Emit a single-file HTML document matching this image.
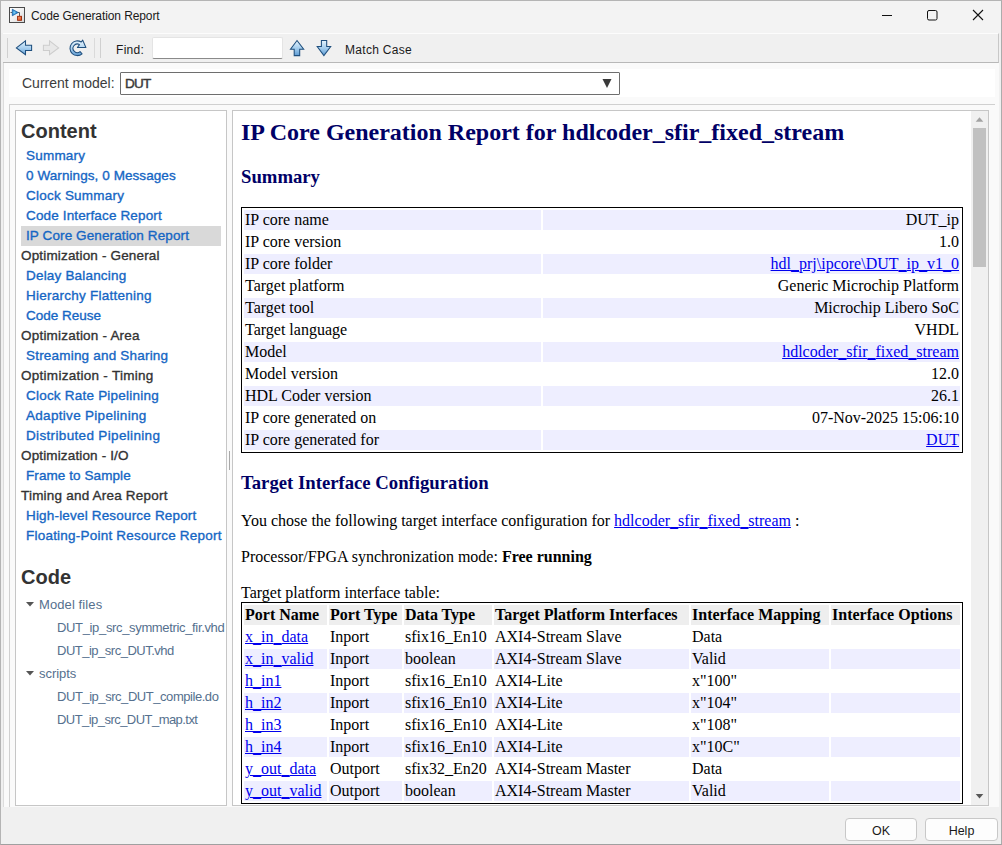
<!DOCTYPE html>
<html><head><meta charset="utf-8">
<style>
*{margin:0;padding:0;box-sizing:border-box}
html,body{width:1002px;height:845px;overflow:hidden;background:#f0f0f0;font-family:"Liberation Sans",sans-serif}
.a{position:absolute}
#win{position:absolute;left:0;top:0;width:1002px;height:845px;border:1px solid #b4b4b4;border-bottom-color:#a0a0a0;border-right-color:#acacac}
#title{position:absolute;left:1px;top:1px;width:1000px;height:32px;background:#f3f3f3}
#tbar{position:absolute;left:3px;top:33px;width:996px;height:30px;background:#f0f0f0;border-top:1px solid #fcfcfc;border-bottom:1px solid #b8b8b8;border-right:1px solid #c8c8c8;box-shadow:0 1px 0 #dedede}
#mid{position:absolute;left:3px;top:63px;width:996px;height:744px;background:#fafafa;border-left:1px solid #dcdcdc}
#cm{position:absolute;left:9px;top:69px;width:986px;height:28px;background:#fff}
#frame{position:absolute;left:9px;top:104px;width:986px;height:703px;border-left:1px solid #d0d0d0;border-top:1px solid #d0d0d0}
#lp{position:absolute;left:15px;top:110px;width:212px;height:696px;background:#fff;border:1px solid #c6c6c6}
#rp{position:absolute;left:232px;top:110px;width:757px;height:696px;background:#fff;border:1px solid #c6c6c6;overflow:hidden}
.btn{position:absolute;top:818px;width:72px;height:23px;background:#fdfdfd;border:1px solid #c8c8c8;border-radius:4px;font-size:12.5px;color:#1a1a1a;text-align:center;line-height:25px}
.hd{font-size:20px;font-weight:bold;line-height:20px;color:#333}
.nl,.nh{font-size:13.5px;line-height:20px;height:20px;white-space:nowrap;-webkit-text-stroke:0.35px currentColor}
.nl{color:#1566c4}
.nh{color:#333}
.cf{font-size:13px;line-height:23px;color:#55708e;white-space:nowrap}
.h2{font:bold 24px/28px "Liberation Serif",serif;color:#000066;white-space:nowrap}
.h3{font:bold 18.72px/22px "Liberation Serif",serif;color:#000066;white-space:nowrap}
.p{font:16px/20px "Liberation Serif",serif;color:#000;white-space:nowrap}
a{color:#0000ee;text-decoration:underline}
a i{font-style:normal;vertical-align:-1px;line-height:0}
.tb{border:1px solid #000;border-spacing:2px;border-collapse:separate;table-layout:fixed;font:16px/18px "Liberation Serif",serif;color:#000}
.tb td,.tb th{padding:1px;height:20px;white-space:nowrap;overflow:hidden;text-align:left;vertical-align:top}
.tb th{background:#eeeeee;font-weight:bold}
.tb td.r{text-align:right}
.tb tr.o td{background:#eeeeff}
</style></head><body>
<div id="win"></div>
<div id="title"></div>
<div id="tbar"></div>
<div id="mid"></div>
<div id="cm"></div>
<div id="frame"></div>
<div id="lp"></div>
<div id="rp"></div>

<!-- title bar -->
<svg class="a" style="left:9px;top:7px" width="16" height="16" viewBox="0 0 16 16">
 <defs><linearGradient id="ib" x1="0" y1="0" x2="1" y2="1"><stop offset="0" stop-color="#ffffff"/><stop offset="0.5" stop-color="#f0f0f0"/><stop offset="1" stop-color="#d4d4d4"/></linearGradient>
 <radialGradient id="tri" cx="0.35" cy="0.5" r="0.6"><stop offset="0" stop-color="#7fd0f4"/><stop offset="0.6" stop-color="#2a8ad0"/><stop offset="1" stop-color="#0b4f98"/></radialGradient>
 <linearGradient id="rs" x1="0" y1="0" x2="1" y2="1"><stop offset="0" stop-color="#f49a70"/><stop offset="1" stop-color="#e2501a"/></linearGradient></defs>
 <rect x="0.5" y="0.5" width="15" height="15" fill="url(#ib)" stroke="#4a4a4a"/>
 <path d="M1.5 5.5H3.2M9 5.5H10.5V9" stroke="#4a4a4a" fill="none" stroke-width="0.9"/>
 <path d="M3.3 2.2L9.2 5.5L3.3 8.8Z" fill="url(#tri)" stroke="#0d5aa0" stroke-width="0.7" stroke-linejoin="round"/>
 <rect x="8.6" y="9.3" width="3.9" height="4" fill="url(#rs)" stroke="#9a2200" stroke-width="0.9"/>
</svg>
<div class="a" style="left:31px;top:9px;font-size:12px;line-height:14px;color:#1a1a1a;letter-spacing:-0.1px">Code Generation Report</div>
<svg class="a" style="left:870px;top:0" width="130" height="32">
 <path d="M12 15.5H22" stroke="#111" stroke-width="1"/>
 <rect x="57.5" y="10.5" width="9.5" height="9.5" rx="1.5" fill="none" stroke="#111"/>
 <path d="M103 10L113 20M113 10L103 20" stroke="#111" stroke-width="1.1"/>
</svg>
<!-- toolbar -->
<div class="a" style="left:7px;top:38px;width:1px;height:20px;background:#d0d0d0"></div>
<svg class="a" style="left:0;top:30px" width="100" height="32" viewBox="0 30 100 32">
 <defs>
  <linearGradient id="ab" x1="0" y1="0" x2="0" y2="1"><stop offset="0" stop-color="#e6f4fd"/><stop offset="0.5" stop-color="#a9d0ef"/><stop offset="1" stop-color="#6aa5d9"/></linearGradient>
  <linearGradient id="rb" x1="0" y1="0" x2="0" y2="1"><stop offset="0" stop-color="#e9f5fd"/><stop offset="0.6" stop-color="#a8cfee"/><stop offset="1" stop-color="#5c9ad3"/></linearGradient>
 </defs>
 <path d="M16.4 47.9L25.5 40.9V45.3H31.6V50.5H25.5V54.7Z" fill="url(#ab)" stroke="#1f4f7e" stroke-width="1.05" stroke-linejoin="miter"/>
 <path d="M58.6 47.9L49.5 40.9V45.3H43.4V50.5H49.5V54.7Z" fill="#e8e8e8" stroke="#cdcdcd" stroke-width="1.05"/>
 <path d="M81.26 42.03A7.35 7.35 0 1 0 82.07 53.88L80.1 51.6A4.3 4.3 0 1 1 79.5 44.6L77.4 47.5H85.9L82.7 40.1Z" fill="url(#rb)" stroke="#1f4f7e" stroke-width="1.05" stroke-linejoin="round"/>
</svg>
<div class="a" style="left:94px;top:38px;width:1px;height:20px;background:#dadada"></div>
<div class="a" style="left:100px;top:38px;width:1px;height:20px;background:#d0d0d0"></div>
<div class="a" style="left:116px;top:43px;font-size:12px;line-height:15px;color:#1a1a1a;letter-spacing:0.3px">Find:</div>
<div class="a" style="left:152px;top:37px;width:131px;height:22px;background:#fff;border:1px solid #e4e4e4;border-bottom:1px solid #8a8a8a;border-radius:2px"></div>
<svg class="a" style="left:280px;top:30px" width="60" height="32" viewBox="280 30 60 32">
 <defs><linearGradient id="ub" x1="0" y1="0" x2="0" y2="1"><stop offset="0" stop-color="#e6f4fd"/><stop offset="0.55" stop-color="#9fcaec"/><stop offset="1" stop-color="#5d9bd4"/></linearGradient></defs>
 <path d="M297 40.5L303.7 49.2H299.7V55.6H294.2V49.2H290.5Z" fill="url(#ub)" stroke="#1f4f7e" stroke-width="1.05"/>
 <path d="M321.4 40.5H326.7V46.5H330.7L323.9 55.5L317.2 46.5H321.4Z" fill="url(#ub)" stroke="#1f4f7e" stroke-width="1.05"/>
</svg>
<div class="a" style="left:345px;top:43px;font-size:12px;line-height:14px;color:#1a1a1a;letter-spacing:0.3px">Match Case</div>
<!-- current model -->
<div class="a" style="left:22px;top:75px;font-size:14px;line-height:16px;color:#3c3c3c">Current model:</div>
<div class="a" style="left:120px;top:72px;width:500px;height:23px;background:#fff;border:1px solid #6e6e6e;border-radius:1px"></div>
<div class="a" style="left:125px;top:75.5px;font-size:13.5px;line-height:15px;color:#3a3a3a;-webkit-text-stroke:0.45px #3a3a3a;letter-spacing:-0.7px">DUT</div>
<svg class="a" style="left:602px;top:79px" width="10" height="9"><path d="M0.5 0H9.5L5 9Z" fill="#3a3a3a"/></svg>
<!-- left nav -->
<div class="a hd" style="left:21px;top:121px">Content</div>
<div class="a" style="left:21px;top:226px;width:200px;height:20px;background:#d9d9d9"></div>
<div class="a nl" style="left:26px;top:146px;letter-spacing:0.209px">Summary</div>
<div class="a nl" style="left:26px;top:166px;letter-spacing:0.078px">0 Warnings, 0 Messages</div>
<div class="a nl" style="left:26px;top:186px;letter-spacing:0.228px">Clock Summary</div>
<div class="a nl" style="left:26px;top:206px;letter-spacing:0.142px">Code Interface Report</div>
<div class="a nl" style="left:26px;top:226px;letter-spacing:0.106px">IP Core Generation Report</div>
<div class="a nh" style="left:21px;top:246px;letter-spacing:0.163px">Optimization - General</div>
<div class="a nl" style="left:26px;top:266px;letter-spacing:0.186px">Delay Balancing</div>
<div class="a nl" style="left:26px;top:286px;letter-spacing:0.246px">Hierarchy Flattening</div>
<div class="a nl" style="left:26px;top:306px;letter-spacing:0.002px">Code Reuse</div>
<div class="a nh" style="left:21px;top:326px;letter-spacing:0.208px">Optimization - Area</div>
<div class="a nl" style="left:26px;top:346px;letter-spacing:0.199px">Streaming and Sharing</div>
<div class="a nh" style="left:21px;top:366px;letter-spacing:0.276px">Optimization - Timing</div>
<div class="a nl" style="left:26px;top:386px;letter-spacing:0.216px">Clock Rate Pipelining</div>
<div class="a nl" style="left:26px;top:406px;letter-spacing:0.302px">Adaptive Pipelining</div>
<div class="a nl" style="left:26px;top:426px;letter-spacing:0.341px">Distributed Pipelining</div>
<div class="a nh" style="left:21px;top:446px;letter-spacing:0.145px">Optimization - I/O</div>
<div class="a nl" style="left:26px;top:466px;letter-spacing:0.084px">Frame to Sample</div>
<div class="a nh" style="left:21px;top:486px;letter-spacing:0.206px">Timing and Area Report</div>
<div class="a nl" style="left:26px;top:506px;letter-spacing:0.179px">High-level Resource Report</div>
<div class="a nl" style="left:26px;top:526px;letter-spacing:0.220px">Floating-Point Resource Report</div>
<div class="a hd" style="left:21px;top:567px">Code</div>
<svg class="a" style="left:26px;top:602px" width="8" height="5"><path d="M0 0H8L4 4.5Z" fill="#555"/></svg>
<div class="a cf" style="left:39px;top:593px;letter-spacing:0.1px">Model files</div>
<div class="a cf" style="left:57px;top:616px;letter-spacing:-0.344px">DUT_ip_src_symmetric_fir.vhd</div>
<div class="a cf" style="left:57px;top:639px;letter-spacing:-0.494px">DUT_ip_src_DUT.vhd</div>
<svg class="a" style="left:26px;top:671px" width="8" height="5"><path d="M0 0H8L4 4.5Z" fill="#555"/></svg>
<div class="a cf" style="left:39px;top:662px;letter-spacing:-0.04px">scripts</div>
<div class="a cf" style="left:57px;top:685px;letter-spacing:-0.45px">DUT_ip_src_DUT_compile.do</div>
<div class="a cf" style="left:57px;top:708px;letter-spacing:-0.545px">DUT_ip_src_DUT_map.txt</div>
<div class="a" style="left:229px;top:451px;width:1px;height:19px;background:#a8a8a8"></div>
<!-- right content -->
<div class="a h2" style="left:241px;top:118px">IP Core Generation Report for hdlcoder_sfir_fixed_stream</div>
<div class="a h3" style="left:241px;top:166px">Summary</div>
<table class="a tb" style="left:241px;top:207px;width:722px">
<colgroup><col style="width:297px"><col></colgroup>
<tr class="o"><td>IP core name</td><td class="r">DUT_ip</td></tr>
<tr><td>IP core version</td><td class="r">1.0</td></tr>
<tr class="o"><td>IP core folder</td><td class="r"><a>hdl<i>_</i>prj\ipcore\DUT<i>_</i>ip<i>_</i>v1<i>_</i>0</a></td></tr>
<tr><td>Target platform</td><td class="r">Generic Microchip Platform</td></tr>
<tr class="o"><td>Target tool</td><td class="r">Microchip Libero SoC</td></tr>
<tr><td>Target language</td><td class="r">VHDL</td></tr>
<tr class="o"><td>Model</td><td class="r"><a>hdlcoder<i>_</i>sfir<i>_</i>fixed<i>_</i>stream</a></td></tr>
<tr><td>Model version</td><td class="r">12.0</td></tr>
<tr class="o"><td>HDL Coder version</td><td class="r">26.1</td></tr>
<tr><td>IP core generated on</td><td class="r">07-Nov-2025 15:06:10</td></tr>
<tr class="o"><td>IP core generated for</td><td class="r"><a>DUT</a></td></tr>
</table>
<div class="a h3" style="left:241px;top:472px">Target Interface Configuration</div>
<div class="a p" style="left:241px;top:511px">You chose the following target interface configuration for <a>hdlcoder<i>_</i>sfir<i>_</i>fixed<i>_</i>stream</a> :</div>
<div class="a p" style="left:241px;top:547px">Processor/FPGA synchronization mode: <b>Free running</b></div>
<div class="a p" style="left:241px;top:583px">Target platform interface table:</div>
<table class="a tb" style="left:241px;top:602px;width:722px">
<colgroup><col style="width:83px"><col style="width:73px"><col style="width:88px"><col style="width:195px"><col style="width:138px"><col></colgroup>
<tr class="hdr"><th>Port Name</th><th>Port Type</th><th>Data Type</th><th>Target Platform Interfaces</th><th>Interface Mapping</th><th>Interface Options</th></tr>
<tr><td><a>x<i>_</i>in<i>_</i>data</a></td><td>Inport</td><td>sfix16_En10</td><td>AXI4-Stream Slave</td><td>Data</td><td></td></tr>
<tr class="o"><td><a>x<i>_</i>in<i>_</i>valid</a></td><td>Inport</td><td>boolean</td><td>AXI4-Stream Slave</td><td>Valid</td><td></td></tr>
<tr><td><a>h<i>_</i>in1</a></td><td>Inport</td><td>sfix16_En10</td><td>AXI4-Lite</td><td>x"100"</td><td></td></tr>
<tr class="o"><td><a>h<i>_</i>in2</a></td><td>Inport</td><td>sfix16_En10</td><td>AXI4-Lite</td><td>x"104"</td><td></td></tr>
<tr><td><a>h<i>_</i>in3</a></td><td>Inport</td><td>sfix16_En10</td><td>AXI4-Lite</td><td>x"108"</td><td></td></tr>
<tr class="o"><td><a>h<i>_</i>in4</a></td><td>Inport</td><td>sfix16_En10</td><td>AXI4-Lite</td><td>x"10C"</td><td></td></tr>
<tr><td><a>y<i>_</i>out<i>_</i>data</a></td><td>Outport</td><td>sfix32_En20</td><td>AXI4-Stream Master</td><td>Data</td><td></td></tr>
<tr class="o"><td><a>y<i>_</i>out<i>_</i>valid</a></td><td>Outport</td><td>boolean</td><td>AXI4-Stream Master</td><td>Valid</td><td></td></tr>
</table>
<!-- scrollbar -->
<div class="a" style="left:971px;top:111px;width:17px;height:694px;background:#f0f0f0"></div>
<svg class="a" style="left:975px;top:117px" width="9" height="5"><path d="M0.7 4.8L4.5 0.3L8.3 4.8Z" fill="#a3a3a3"/></svg>
<div class="a" style="left:973px;top:128px;width:13px;height:139px;background:#c1c1c1"></div>
<svg class="a" style="left:975px;top:794px" width="9" height="5"><path d="M0.7 0H8.3L4.5 4.5Z" fill="#585858"/></svg>
<div class="btn" style="left:845px">OK</div>
<div class="btn" style="left:925px;width:73px">Help</div>
</body></html>
